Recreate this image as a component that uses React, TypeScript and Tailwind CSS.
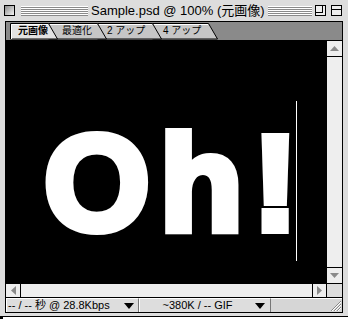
const stripes =
  "h-[10px] bg-[repeating-linear-gradient(to_bottom,#ffffff_0px,#ffffff_1px,#8a8a8a_1px,#8a8a8a_2px)]";

function Tab({
  label,
  w,
  active,
  z,
  pl,
}: {
  label: string;
  w: number;
  active?: boolean;
  z: string;
  pl: string;
}) {
  const fill = active ? "#e2e2e2" : "#c6c6c6";
  return (
    <div className={`relative h-[16px] shrink-0 ${z}`} style={{ width: w }}>
      <svg
        className="absolute left-0 top-0 overflow-visible"
        width={w + 10}
        height={16}
      >
        <polygon
          points={`0.5,16 0.5,0.5 ${w + 0.5},0.5 ${w + 9.5},16`}
          fill={fill}
          stroke="#000"
          strokeWidth={1}
        />
        <polyline
          points={`1.5,16 1.5,1.5 ${w},1.5`}
          fill="none"
          stroke="#fff"
          strokeWidth={1}
        />
      </svg>
      <span
        className={`relative block ${pl} pt-[2px] text-[10px] leading-[12px] text-black whitespace-nowrap ${
          active ? "font-bold" : ""
        }`}
      >
        {label}
      </span>
    </div>
  );
}

function DownTri() {
  return (
    <svg width="10" height="6" className="shrink-0">
      <polygon points="0,0 10,0 5,6" fill="#000" />
    </svg>
  );
}

export default function App() {
  return (
    <div className="w-[348px] h-[319px] bg-white overflow-hidden font-['Liberation_Sans','Noto_Sans_CJK_JP',sans-serif]">
      <div className="w-[348px] h-[317px] bg-[#dddddd] border-b border-black flex flex-col">
        {/* title bar */}
        <div className="h-[21px] shrink-0 flex items-center">
          <div className="ml-[4px] w-[11px] h-[11px] border border-black bg-[linear-gradient(135deg,#8c8c8c,#f4f4f4)]" />
          <div className={`ml-[6px] w-[67px] ${stripes}`} />
          <div className="px-[3px] text-[13px] leading-[16px] text-black whitespace-nowrap">
            Sample.psd @ 100% (元画像)
          </div>
          <div className={`flex-1 ${stripes}`} />
          <div className="ml-[3px] w-[11px] h-[11px] border border-black bg-[#eeeeee] relative">
            <div className="w-[7px] h-[7px] border-r border-b border-black" />
          </div>
          <div className="ml-[5px] mr-[6px] w-[11px] h-[11px] border border-black bg-[#eeeeee] flex flex-col">
            <div className="h-[4px] border-b border-black" />
          </div>
        </div>

        {/* inner frame */}
        <div className="ml-[5px] w-[338px] h-[292px] shrink-0 border border-black flex flex-col">
          {/* tabs */}
          <div className="h-[19px] shrink-0 bg-[#8a8a8a] border-b border-black flex items-start pt-[1px] pl-[4px] overflow-hidden">
            <Tab label="元画像" w={38} active z="z-[4]" pl="pl-[8px]" />
            <Tab label="最適化" w={49} z="z-[3]" pl="pl-[14px]" />
            <Tab label="2 アップ" w={55} z="z-[2]" pl="pl-[10px]" />
            <Tab label="4 アップ" w={56} z="z-[1]" pl="pl-[11px]" />
          </div>

          {/* canvas + vertical scroll */}
          <div className="h-[242px] shrink-0 flex">
            <div className="relative w-[320px] bg-black overflow-hidden">
              <div className="pl-[38px] pt-[74px] text-white font-bold text-[136px] leading-none tracking-[10px] [-webkit-text-stroke:8px_white] whitespace-nowrap">
                Oh!
              </div>
              <div className="absolute left-[290px] top-[60px] h-[160px] w-px bg-white" />
            </div>
            <div className="w-[16px] border-l border-black bg-[#eeeeee] flex flex-col">
              <div className="h-[16px] border-b border-black flex items-center justify-center">
                <svg width="9" height="5">
                  <polygon points="4.5,0 9,5 0,5" fill="#8a8a8a" />
                </svg>
              </div>
              <div className="flex-1" />
              <div className="h-[16px] border-t border-black flex items-center justify-center">
                <svg width="9" height="5">
                  <polygon points="0,0 9,0 4.5,5" fill="#8a8a8a" />
                </svg>
              </div>
            </div>
          </div>

          {/* horizontal scroll */}
          <div className="h-[14px] shrink-0 border-t border-black flex">
            <div className="w-[15px] border-r border-black bg-[#eeeeee] flex items-center justify-center">
              <svg width="5" height="9">
                <polygon points="0,4.5 5,0 5,9" fill="#8a8a8a" />
              </svg>
            </div>
            <div className="flex-1 bg-[#eeeeee]" />
            <div className="w-[14px] border-l border-black bg-[#eeeeee] flex items-center justify-center">
              <svg width="5" height="9">
                <polygon points="0,0 5,4.5 0,9" fill="#8a8a8a" />
              </svg>
            </div>
            <div className="w-[16px] border-l border-black bg-[#dddddd]" />
          </div>

          {/* status bar */}
          <div className="h-[15px] shrink-0 border-t border-black flex text-[11px] leading-[13px] text-black">
            <div className="w-[133px] flex items-center justify-between pl-[1px] pr-[4px] bg-[#dddddd] border-t border-l border-white border-r border-r-[#777777]">
              <span className="whitespace-nowrap">-- / -- 秒 @ 28.8Kbps</span>
              <DownTri />
            </div>
            <div className="w-[132px] flex items-center pr-[5px] bg-[#dddddd] border-t border-l border-white border-r border-r-[#777777]">
              <span className="flex-1 text-center whitespace-nowrap">~380K / -- GIF</span>
              <DownTri />
            </div>
            <div className="flex-1 bg-[#d6d6d6] border-t border-white" />
            <div className="w-[15px] bg-[#d6d6d6] border-t border-white flex items-end justify-end">
              <svg width="13" height="13">
                <line x1="2" y1="12" x2="12" y2="2" stroke="#888" />
                <line x1="3" y1="12" x2="12" y2="3" stroke="#fff" />
                <line x1="5" y1="12" x2="12" y2="5" stroke="#888" />
                <line x1="6" y1="12" x2="12" y2="6" stroke="#fff" />
                <line x1="8" y1="12" x2="12" y2="8" stroke="#888" />
                <line x1="9" y1="12" x2="12" y2="9" stroke="#fff" />
              </svg>
            </div>
          </div>
        </div>
        <div className="flex-1" />
      </div>
      <div className="w-[3px] h-[2px] bg-black" />
    </div>
  );
}
